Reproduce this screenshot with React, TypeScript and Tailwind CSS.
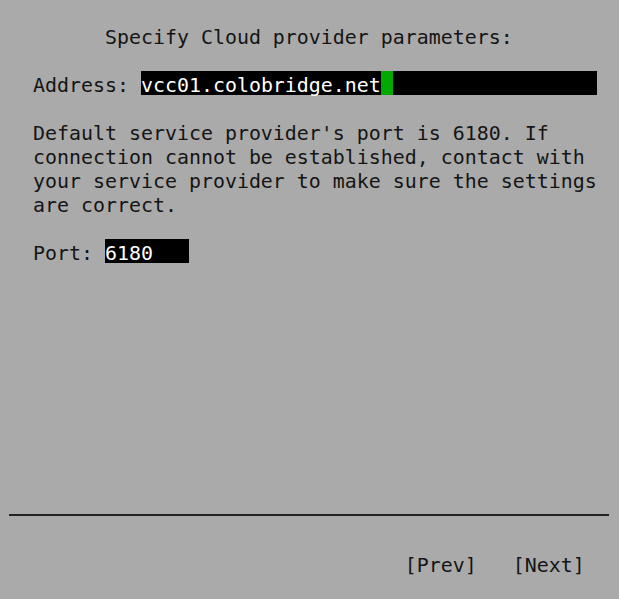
import React from 'react';

const Row = ({ children }: { children?: React.ReactNode }) => (
  <div className="h-[24px] leading-[30px] whitespace-pre">{children}</div>
);

export default function App() {
  const help = [
    "  Default service provider's port is 6180. If",
    '  connection cannot be established, contact with',
    '  your service provider to make sure the settings',
    '  are correct.',
  ];

  return (
    <div
      className="w-[619px] h-[599px] bg-[#aaaaaa] text-[#151515] pl-[9px] text-[19.93px] overflow-hidden"
      style={{ fontFamily: '"DejaVu Sans Mono", monospace' }}
    >
      <div className="h-[23px]" />
      <Row>{'        Specify Cloud provider parameters:'}</Row>
      <Row />
      <Row>
        {'  Address: '}
        <span className="inline-flex align-top w-[456px] h-[24px] bg-black text-white">
          <span>vcc01.colobridge.net</span>
          <span className="w-[12px] h-[24px] bg-[#00aa00]" />
        </span>
      </Row>
      <Row />
      {help.map((line) => (
        <Row key={line}>{line}</Row>
      ))}
      <Row />
      <Row>
        {'  Port: '}
        <span className="inline-flex align-top w-[84px] h-[24px] bg-black text-white">
          <span>6180</span>
        </span>
      </Row>
      {/* empty screen area */}
      <div className="h-[240px]" />
      <div className="h-[24px] flex items-center pr-[10px]">
        <div className="w-full h-[2px] bg-[#222222]" />
      </div>
      <Row />
      <Row>{'                                 [Prev]   [Next]'}</Row>
    </div>
  );
}
